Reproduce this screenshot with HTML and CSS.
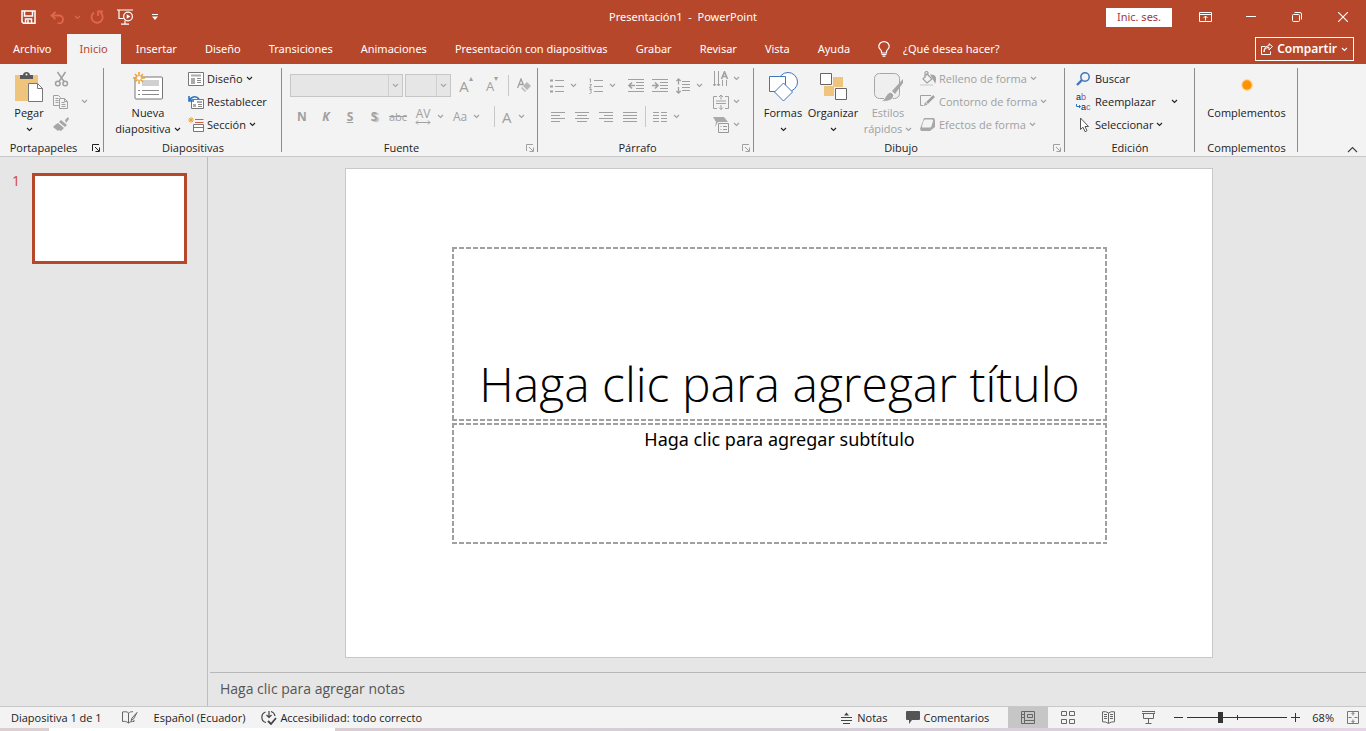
FILE: index.html
```html
<!DOCTYPE html>
<html lang="es">
<head>
    <meta charset="UTF-8">
    <meta name="viewport" content="width=device-width, initial-scale=1.0">
    <title>Presentación1 - PowerPoint</title>
    <link rel="stylesheet" href="styles.css">
</head>
<body>

    <!-- shared icons -->
    <svg class="sprite" aria-hidden="true">
        <symbol id="chevron" viewBox="0 0 7 5"><path d="M1 1l2.5 2.5L6 1" fill="none" stroke="currentColor" stroke-width="1.1"/></symbol>
        <symbol id="launcher" viewBox="0 0 8 8"><path d="M.5 7V.5H7M3 3l4 4M7.5 3.500v4h-4" fill="none" stroke="currentColor"/></symbol>
    </svg>

    <header class="titlebar">
        <div class="quick">
            <button class="quick-btn" aria-label="Guardar">
                <svg width="15" height="14" viewBox="0 0 15 14" fill="none" stroke="#fff" stroke-width="1.5"><path d="M1 1h13v12.200H2.500L1 11.800zM3.500 1v5h8V1M4.500 13V9h6v4M7 10v3"/></svg>
            </button>
            <button class="quick-btn faded" aria-label="Deshacer">
                <svg width="15" height="13" viewBox="0 0 15 13" fill="none" stroke="currentColor" stroke-width="1.8"><path d="M5.500 .8L1.500 4.500l4 3.700M1.500 4.500H9a4 4 0 0 1 0 8H7.500"/></svg>
            </button>
            <button class="quick-btn narrow faded" aria-label="Opciones de deshacer"><svg class="chev"><use href="#chevron"/></svg></button>
            <button class="quick-btn faded" aria-label="Repetir">
                <svg width="14" height="14" viewBox="0 0 14 14" fill="none" stroke="currentColor" stroke-width="1.800"><path d="M4 2.500A5.600 5.600 0 1 0 10.500 2.700M8 6V1.500h5"/></svg>
            </button>
            <button class="quick-btn" aria-label="Presentación desde el principio">
                <svg width="17" height="16" viewBox="0 0 17 16" fill="none" stroke="#fff" stroke-width="1.200"><path d="M0 1h16M2 1v8.500h4.500M8 11.500V15M4 15.200h8"/><circle cx="11" cy="7.500" r="4.400"/><path d="M9.700 5.200v4.600l3.600-2.300z" fill="#fff" stroke="none"/></svg>
            </button>
            <button class="quick-btn" aria-label="Personalizar barra de acceso rápido">
                <svg width="6" height="6" viewBox="0 0 6 6" fill="#fff"><path d="M0 0h6v1H0zM0 2.500h6L3 6z"/></svg>
            </button>
        </div>
        <span class="doc-title">Presentación1 &nbsp;-&nbsp; PowerPoint</span>
        <div class="window-tools">
            <button class="signin">Inic. ses.</button>
            <button class="win-btn" aria-label="Opciones de presentación de la cinta">
                <svg width="13" height="10" viewBox="0 0 13 10" fill="none" stroke="#fff"><path d="M.5 .5h12v9H.5zM.5 2.500h12M6.500 8.500V4M4.500 6l2-2 2 2"/></svg>
            </button>
            <button class="win-btn" aria-label="Minimizar">
                <svg width="10" height="10" viewBox="0 0 10 10" stroke="#fff"><path d="M0 4.500h10"/></svg>
            </button>
            <button class="win-btn" aria-label="Restaurar">
                <svg width="10" height="10" viewBox="0 0 10 10" fill="none" stroke="#fff"><rect x=".5" y="2.500" width="7" height="7" rx="1"/><path d="M2.500 .5H8a1.500 1.500 0 0 1 1.500 1.500v5.500"/></svg>
            </button>
            <button class="win-btn" aria-label="Cerrar">
                <svg width="10" height="10" viewBox="0 0 10 10" stroke="#fff" stroke-width="1.100"><path d="M0 0l10 10M10 0L0 10"/></svg>
            </button>
        </div>
    </header>

    <nav class="tabs">
        <button class="tab">Archivo</button>
        <button class="tab active">Inicio</button>
        <button class="tab">Insertar</button>
        <button class="tab">Diseño</button>
        <button class="tab">Transiciones</button>
        <button class="tab">Animaciones</button>
        <button class="tab">Presentación con diapositivas</button>
        <button class="tab">Grabar</button>
        <button class="tab">Revisar</button>
        <button class="tab">Vista</button>
        <button class="tab">Ayuda</button>
        <label class="tell-me">
            <svg width="12" height="16" viewBox="0 0 12 16" fill="none" stroke="#fff" stroke-width="1.200"><path d="M3.500 12V10.500C3.500 9 .8 8 .8 5.500a5.200 4.900 0 0 1 10.400 0C11.200 8 8.500 9 8.500 10.500V12zM3.500 13.500h5M4.500 15.200h3"/></svg>
            <input type="text" placeholder="¿Qué desea hacer?" aria-label="¿Qué desea hacer?">
        </label>
        <button class="share">
            <svg width="12" height="12" viewBox="0 0 12 12" fill="none" stroke="#fff"><path d="M4.500 3.500h-4v8h9v-3M3 9c0-3 2-4.500 5-4.500V7l3.500-3.500L8 .7v2C5 3 3 5 3 9z"/></svg>
            Compartir
            <svg class="chev"><use href="#chevron"/></svg>
        </button>
    </nav>

    <section class="ribbon">
        <div class="group clipboard">
            <div class="group-body">
                <button class="big">
                    <svg width="30" height="32" viewBox="0 0 30 32">
                        <path d="M1 4h23v26H1z" fill="#efc57d"/><path d="M6 8V4h3c0-4 7-4 7 0h3v4z" fill="#595959"/><circle cx="12.500" cy="3.500" r="1" fill="#f3f3f3"/>
                        <path d="M14.500 12.500h9l5 5v13h-14z" fill="#fff" stroke="#777"/><path d="M23.500 12.500v5h5" fill="none" stroke="#777"/>
                    </svg>
                    <span>Pegar</span>
                    <span><svg class="chev"><use href="#chevron"/></svg></span>
                </button>
                <div class="rows">
                    <button class="small off" aria-label="Cortar">
                        <svg width="16" height="16" viewBox="0 0 16 16" fill="none" stroke="currentColor" stroke-width="1.500"><path d="M4.500 1l6.500 9.500M12.500 1L6 10.500"/><circle cx="4.800" cy="12.500" r="2.300"/><circle cx="12.200" cy="12.500" r="2.300"/></svg>
                    </button>
                    <button class="small off" aria-label="Copiar">
                        <svg width="16" height="14" viewBox="0 0 16 14" fill="none" stroke="currentColor"><path d="M6 10.500H.5V.5h5l2 2M2.500 3.500h3M2.500 5.500h3M2.500 7.500h3"/><path d="M6.500 3.500h5l3 3v7h-8zM11.500 3.500v3h3M8.500 7.500h3M8.500 9.500h4M8.500 11.500h4"/></svg>
                        <svg class="chev"><use href="#chevron"/></svg>
                    </button>
                    <button class="small off" aria-label="Copiar formato">
                        <svg width="16" height="15" viewBox="0 0 16 15" fill="#a6a6a6"><path d="M12 3l3-3 1 2-3 4zM8 3l6 5-2 2-6-5zM5 6l6 5-3 3-2-1-1 1-5-4 2-2z"/></svg>
                    </button>
                </div>
            </div>
            <div class="group-label"><span>Portapapeles</span><button class="launch" aria-label="Más opciones de Portapapeles"><svg width="8" height="8"><use href="#launcher"/></svg></button></div>
        </div>

        <div class="group slides">
            <div class="group-body">
                <button class="big">
                    <svg width="30" height="32" viewBox="0 0 30 32">
                        <rect x="2" y="6" width="27.500" height="22" rx="1" fill="#fff" stroke="#777"/><path d="M9 9h17v6H9z" fill="#d0d0d0"/><path d="M5 19.500h2M9 19.500h17M5 23.500h2M9 23.500h17" stroke="#8a8a8a"/>
                        <path d="M6 1v12M0 7h12M2 3l8 8M10 3l-8 8" stroke="#f0a030" stroke-width="1.500"/><circle cx="6" cy="7" r="2.400" fill="#fff" stroke="#f0b050"/>
                    </svg>
                    <span>Nueva</span>
                    <span>diapositiva <svg class="chev"><use href="#chevron"/></svg></span>
                </button>
                <div class="rows">
                    <button class="small">
                        <svg width="16" height="14" viewBox="0 0 16 14"><path d="M.5 .5h15v13H.5z" fill="#fff" stroke="#777"/><path d="M3 2.500h10v2H3zM3 6h4v6H3z" fill="#aaa"/><path d="M9 6.500h4M9 8.500h4M9 10.500h4" stroke="#888"/></svg>
                        Diseño <svg class="chev"><use href="#chevron"/></svg>
                    </button>
                    <button class="small">
                        <svg width="16" height="14" viewBox="0 0 16 14"><path d="M3.500 4.500h12v9h-12z" fill="#fff" stroke="#777"/><path d="M9 6h5v2H9zM5 9h3v3H5z" fill="#aaa"/><path d="M10 9.500h4M10 11.500h4" stroke="#888"/><path d="M1.500 6C2 2 8 0 11 4M1 1v5h5" fill="none" stroke="#2b72c4" stroke-width="1.600"/></svg>
                        Restablecer
                    </button>
                    <button class="small">
                        <svg width="16" height="15" viewBox="0 0 16 15"><path d="M3 0v6M0 3h6M1 1l4 4M5 1L1 5" stroke="#f0a030"/><path d="M7 2.500h8.500M7 5.500h8.500" stroke="#d2603d"/><path d="M5.500 7.500h10v7h-10z" fill="#fff" stroke="#777"/><path d="M5.500 10.500h10" stroke="#777"/></svg>
                        Sección <svg class="chev"><use href="#chevron"/></svg>
                    </button>
                </div>
            </div>
            <div class="group-label"><span>Diapositivas</span></div>
        </div>

        <div class="group font">
            <div class="group-body lines">
                <div class="line">
                    <span class="combo combo-font"><select disabled aria-label="Fuente"><option></option></select><svg class="chev"><use href="#chevron"/></svg></span>
                    <span class="combo combo-size"><select disabled aria-label="Tamaño de fuente"><option></option></select><svg class="chev"><use href="#chevron"/></svg></span>
                    <button class="tool glyph off" aria-label="Aumentar tamaño de fuente">A<sup>▴</sup></button>
                    <button class="tool glyph less off" aria-label="Disminuir tamaño de fuente">A<sup>▾</sup></button>
                    <span class="divider"></span>
                    <button class="tool off" aria-label="Borrar formato">
                        <svg width="15" height="15" viewBox="0 0 15 15" fill="none" stroke="currentColor" stroke-width="1.300"><path d="M.6 10L4 1l2.500 6M2 6.500h4"/><path d="M4 10l6-6 4 4-6 6z" fill="#b8b8b8" stroke="none"/><path d="M5.500 8.500l4 4" stroke="#f3f3f3"/></svg>
                    </button>
                </div>
                <div class="line">
                    <button class="tool off"><b>N</b></button>
                    <button class="tool off"><b><i>K</i></b></button>
                    <button class="tool off"><b><u>S</u></b></button>
                    <button class="tool off shadow"><b>S</b></button>
                    <button class="tool off strike"><s>abc</s></button>
                    <button class="tool off spacing"><span class="kern">AV<svg width="16" height="5" viewBox="0 0 16 5" fill="none" stroke="currentColor"><path d="M1 2.500h14M3 .5l-2 2 2 2M13 .5l2 2-2 2"/></svg></span><svg class="chev"><use href="#chevron"/></svg></button>
                    <button class="tool off case">Aa<svg class="chev"><use href="#chevron"/></svg></button>
                    <span class="divider"></span>
                    <button class="tool off color"><span>A</span><svg class="chev"><use href="#chevron"/></svg></button>
                </div>
            </div>
            <div class="group-label"><span>Fuente</span><button class="launch off" aria-label="Más opciones de Fuente"><svg width="8" height="8"><use href="#launcher"/></svg></button></div>
        </div>

        <div class="group paragraph">
            <div class="group-body">
                <div class="lines">
                    <div class="line">
                        <button class="tool off list" aria-label="Viñetas"><svg width="14" height="14" viewBox="0 0 14 14" stroke="currentColor"><path d="M5 1.500h9M5 7.500h9M5 12.500h9"/><path d="M0 1.500h3M0 7.500h3M0 12.500h3" stroke-width="2"/></svg><svg class="chev"><use href="#chevron"/></svg></button>
                        <button class="tool off list" aria-label="Numeración"><svg width="14" height="16" viewBox="0 0 14 16" fill="none" stroke="currentColor"><path d="M5 2.500h9M5 8.500h9M5 13.500h9M.5 1h1v3.500M.5 6.500h2l-2 3.500h2M.5 11.500h2l-1 1.500 1 1-1 1.500h-1"/></svg><svg class="chev"><use href="#chevron"/></svg></button>
                        <button class="tool off" aria-label="Disminuir sangría"><svg width="16" height="13" viewBox="0 0 16 13" fill="none" stroke="currentColor"><path d="M0 .5h16M8 3.500h8M8 6.500h8M8 9.500h8M0 12.500h16"/><path d="M7 6.500H1M4 3.500l-3 3 3 3" stroke-width="1.600"/></svg></button>
                        <button class="tool off" aria-label="Aumentar sangría"><svg width="16" height="13" viewBox="0 0 16 13" fill="none" stroke="currentColor"><path d="M0 .5h16M8 3.500h8M8 6.500h8M8 9.500h8M0 12.500h16"/><path d="M0 6.500h6M3 3.500l3 3-3 3" stroke-width="1.600"/></svg></button>
                        <button class="tool off list" aria-label="Interlineado"><svg width="14" height="16" viewBox="0 0 14 16" fill="none" stroke="currentColor"><path d="M6 3.500h8M6 6.500h8M6 9.500h8M6 12.500h8"/><path d="M2.500 1v5.500M.3 3l2.200-2 2.200 2M2.500 9v6M.3 13l2.200 2 2.200-2" stroke-width="1.300"/></svg><svg class="chev"><use href="#chevron"/></svg></button>
                    </div>
                    <div class="line">
                        <button class="tool off" aria-label="Alinear a la izquierda"><svg width="14" height="10" viewBox="0 0 14 10" stroke="currentColor"><path d="M0 .5h14M0 3.500h9M0 6.500h14M0 9.500h9"/></svg></button>
                        <button class="tool off" aria-label="Centrar"><svg width="14" height="10" viewBox="0 0 14 10" stroke="currentColor"><path d="M0 .5h14M2 3.500h10M0 6.500h14M2 9.500h10"/></svg></button>
                        <button class="tool off" aria-label="Alinear a la derecha"><svg width="14" height="10" viewBox="0 0 14 10" stroke="currentColor"><path d="M0 .5h14M5 3.500h9M0 6.500h14M5 9.500h9"/></svg></button>
                        <button class="tool off" aria-label="Justificar"><svg width="14" height="10" viewBox="0 0 14 10" stroke="currentColor"><path d="M0 .5h14M0 3.500h14M0 6.500h14M0 9.500h14"/></svg></button>
                        <span class="divider"></span>
                        <button class="tool off list" aria-label="Columnas"><svg width="14" height="10" viewBox="0 0 14 10" stroke="currentColor"><path d="M0 .5h6M8 .5h6M0 3.500h6M8 3.500h6M0 6.500h6M8 6.500h6M0 9.500h6M8 9.500h6"/></svg><svg class="chev"><use href="#chevron"/></svg></button>
                    </div>
                </div>
                <div class="rows">
                    <button class="small off" aria-label="Dirección del texto"><svg width="16" height="16" viewBox="0 0 16 16" fill="none" stroke="currentColor"><path d="M1.500 0v15M5.500 0v15M9.500 9v6M13.500 9v6M0 13l1.500 2L3 13M4 13l1.500 2L7 13"/><path d="M8.500 8L11.500 .8 14.500 8M9.500 5.500h4" stroke-width="1.600"/></svg><svg class="chev"><use href="#chevron"/></svg></button>
                    <button class="small off" aria-label="Alinear texto"><svg width="16" height="16" viewBox="0 0 16 16" fill="none" stroke="currentColor"><path d="M4 2.500H.5v12H4M12 2.500h3.500v12H12M3 7h10M3 9.500h10M8 1v4.500M6 3l2-2 2 2M8 11v4.500M6 13.500l2 2 2-2"/></svg><svg class="chev"><use href="#chevron"/></svg></button>
                    <button class="small off" aria-label="Convertir a SmartArt"><svg width="16" height="16" viewBox="0 0 16 16"><path d="M0 0h11l4 5H5l-3 5 1-5z" fill="#aaa"/><path d="M5.500 6.500h10v9h-10z" fill="#f3f3f3" stroke="#999"/><path d="M7.500 9.500h1M10 9.500h4M7.500 12.500h1M10 12.500h4" stroke="#999"/></svg><svg class="chev"><use href="#chevron"/></svg></button>
                </div>
            </div>
            <div class="group-label"><span>Párrafo</span><button class="launch off" aria-label="Más opciones de Párrafo"><svg width="8" height="8"><use href="#launcher"/></svg></button></div>
        </div>

        <div class="group drawing">
            <div class="group-body">
                <button class="big">
                    <svg width="30" height="32" viewBox="0 0 30 32" fill="#fff" stroke="#3f76bd"><circle cx="20" cy="11" r="9.500"/><path d="M1.500 5.500h16v15h-16z"/><path d="M15.500 12l9 9-9 9-9-9z"/></svg>
                    <span>Formas</span>
                    <span><svg class="chev"><use href="#chevron"/></svg></span>
                </button>
                <button class="big">
                    <svg width="28" height="30" viewBox="0 0 28 30"><path d="M14 5h10v10H14zM5 14h10v10H5z" fill="#efc57d"/><path d="M1.500 1.500h11v11h-11zM16.500 16.500h11v11h-11z" fill="#fff" stroke="#666"/></svg>
                    <span>Organizar</span>
                    <span><svg class="chev"><use href="#chevron"/></svg></span>
                </button>
                <button class="big off">
                    <svg width="30" height="32" viewBox="0 0 30 32"><rect x="1.500" y="2.500" width="25" height="25" rx="5" fill="#f0eff0" stroke="#a6a6a6"/><path d="M30 8L19 20l3 3 8-11z" fill="#a6a6a6"/><path d="M18 21l3 3c-1 6-7 7-13 6 5-1 4-8 10-9z" fill="#a6a6a6" stroke="#f3f3f3"/></svg>
                    <span>Estilos</span>
                    <span>rápidos <svg class="chev"><use href="#chevron"/></svg></span>
                </button>
                <div class="rows">
                    <button class="small off">
                        <svg width="16" height="15" viewBox="0 0 16 15" fill="none" stroke="currentColor" stroke-width="1.200"><path d="M7 3l5 5-5 4-4-4zM5 7V1.500q1.500-2 3 0V5"/><path d="M11 4c4 0 5 2 4 7-1-2-2-4-4-7z" fill="#a6a6a6"/><path d="M0 14h13" stroke="#ddd" stroke-width="2"/></svg>
                        Relleno de forma <svg class="chev"><use href="#chevron"/></svg>
                    </button>
                    <button class="small off">
                        <svg width="16" height="15" viewBox="0 0 16 15" fill="none" stroke="currentColor"><path d="M11 1.500H.5v10h3"/><path d="M14 2L7 9" stroke-width="2.500"/><path d="M5 8l2.500 2.500L4 12z" fill="#a6a6a6" stroke="none"/></svg>
                        Contorno de forma <svg class="chev"><use href="#chevron"/></svg>
                    </button>
                    <button class="small off">
                        <svg width="16" height="14" viewBox="0 0 16 14"><path d="M4 0h10l1 2v7l-5 4H1L0 11z" fill="#a8a8a8"/><path d="M5 1.500h7q1.500 0 1 1.500L11.500 8q-.5 1.500-2 1.500H3Q1.500 9.500 2 8l1.500-5Q4 1.500 5 1.500z" fill="#f3f3f3"/></svg>
                        Efectos de forma <svg class="chev"><use href="#chevron"/></svg>
                    </button>
                </div>
            </div>
            <div class="group-label"><span>Dibujo</span><button class="launch off" aria-label="Más opciones de Dibujo"><svg width="8" height="8"><use href="#launcher"/></svg></button></div>
        </div>

        <div class="group editing">
            <div class="group-body">
                <div class="rows">
                    <button class="small">
                        <svg width="16" height="14" viewBox="0 0 16 14" fill="none" stroke="#3f76bd"><circle cx="9" cy="5" r="4.200" stroke-width="1.500"/><path d="M6 8l-5 5" stroke-width="2.400"/></svg>
                        Buscar
                    </button>
                    <button class="small replace">
                        <span class="ab-icon">
                            <span>a<em>b</em></span>
                            <span class="ab-new"><svg width="5" height="5" viewBox="0 0 5 5" fill="none" stroke="#2b72c4"><path d="M.5 0v2.500h4M3 1l1.500 1.500L3 4"/></svg>a<i>c</i></span>
                        </span>
                        Reemplazar <svg class="chev"><use href="#chevron"/></svg>
                    </button>
                    <button class="small">
                        <svg width="16" height="16" viewBox="0 0 16 16" fill="#fff" stroke="#555"><path d="M4.500 1v11.500l2.500-2.300 2 4.500 2-1-2-4.200h3.500z"/></svg>
                        Seleccionar <svg class="chev"><use href="#chevron"/></svg>
                    </button>
                </div>
            </div>
            <div class="group-label"><span>Edición</span></div>
        </div>

        <div class="group addins">
            <div class="group-body">
                <button class="big">
                    <svg width="16" height="32" viewBox="0 0 16 32"><circle cx="8" cy="14" r="6" fill="#fbd9a5"/><circle cx="8" cy="14" r="4.700" fill="#ff9200"/></svg>
                    <span>Complementos</span>
                </button>
            </div>
            <div class="group-label"><span>Complementos</span></div>
        </div>

        <button class="collapse" aria-label="Contraer la cinta">
            <svg width="11" height="7" viewBox="0 0 11 7" fill="none" stroke="#444" stroke-width="1.200"><path d="M1 6l4.500-4.500L10 6"/></svg>
        </button>
    </section>

    <div class="workspace">
        <aside class="thumbs">
            <span class="thumb-number">1</span>
            <div class="thumb"></div>
        </aside>
        <main class="editor">
            <div class="canvas">
                <div class="slide">
                    <h1 class="placeholder slide-title">Haga clic para agregar título</h1>
                    <p class="placeholder slide-subtitle">Haga clic para agregar subtítulo</p>
                </div>
            </div>
            <input class="notes" type="text" placeholder="Haga clic para agregar notas" aria-label="Notas">
        </main>
    </div>

    <footer class="statusbar">
        <span class="slide-count">Diapositiva 1 de 1</span>
        <button class="status-btn spell" aria-label="Revisión ortográfica">
            <svg width="16" height="13" viewBox="0 0 16 13" fill="none" stroke="#666"><path d="M6.500 12V2C5 .5 3 .5 .5 1v9.500c2.500-.5 4 0 6 1.500 2-1.500 3-1.500 5.500-1.500V9M6.500 2C8 1 9 .7 11 .7"/><path d="M15 1.500l-5 5.500-1 2.500L11.500 8z"/></svg>
        </button>
        <button class="status-btn">Español (Ecuador)</button>
        <button class="status-btn access">
            <svg width="16" height="15" viewBox="0 0 16 15" fill="none" stroke="#444" stroke-width="1.200"><path d="M4.500 2A5.500 5.500 0 0 0 5 12.500M8 1v6M5.500 5L8 7.500 10.500 5M10 1.500c2 .5 3.500 2 4 4.500"/><path d="M7 11l3 3 5-6" stroke-width="1.800"/></svg>
            Accesibilidad: todo correcto
        </button>
        <div class="status-right">
            <button class="status-btn">
                <svg width="11" height="12" viewBox="0 0 11 12" stroke="#444"><path d="M0 5.500h11M0 8.500h11M2 11.500h7" /><path d="M3 3.500L5.500 .5 8 3.500z" fill="#444" stroke="none"/></svg>
                Notas
            </button>
            <button class="status-btn comments">
                <svg width="14" height="13" viewBox="0 0 14 13" fill="#555"><path d="M1 0h12q1 0 1 1v7q0 1-1 1H6l-3 4V9H1Q0 9 0 8V1q0-1 1-1z"/></svg>
                Comentarios
            </button>
            <div class="views">
                <button class="view active" aria-label="Normal"><svg width="14" height="13" viewBox="0 0 14 13" fill="none" stroke="#666"><path d="M.5 .5h13v12H.5zM3.500 .5v12M6.500 3.500h5v3h-5zM3.500 9.500h10M0 3.500h3M0 6.500h3"/></svg></button>
                <button class="view" aria-label="Clasificador de diapositivas"><svg width="14" height="13" viewBox="0 0 14 13" fill="none" stroke="#666"><path d="M.5 .5h5v4h-5zM8.500 .5h5v4h-5zM.5 8.500h5v4h-5zM8.500 8.500h5v4h-5z"/></svg></button>
                <button class="view" aria-label="Vista de lectura"><svg width="13" height="13" viewBox="0 0 13 13" fill="none" stroke="#666"><path d="M6.500 2Q4 0 .5 .8v10Q4 10.500 6.500 12.500 9 10.500 12.500 10.800v-10Q9 0 6.500 2zv10M2 3.500h3M2 5.500h3M2 7.500h3M8 3.500h3M8 5.500h3M8 7.500h3"/></svg></button>
                <button class="view" aria-label="Presentación"><svg width="13" height="13" viewBox="0 0 13 13" fill="none" stroke="#666"><path d="M0 .5h13v2H0M1.500 2.500v5h10v-5M6.500 7.500v5M3.500 12.500h6"/></svg></button>
            </div>
            <div class="zoom">
                <button class="zoom-btn" aria-label="Alejar"><svg width="9" height="9" viewBox="0 0 9 9" stroke="#333"><path d="M0 4.500h9"/></svg></button>
                <input type="range" min="0" max="100" value="32" aria-label="Zoom">
                <button class="zoom-btn" aria-label="Acercar"><svg width="9" height="9" viewBox="0 0 9 9" stroke="#333"><path d="M0 4.500h9M4.500 0v9"/></svg></button>
            </div>
            <button class="status-btn percent">68%</button>
            <button class="status-btn fit" aria-label="Ajustar a la ventana"><svg width="12" height="13" viewBox="0 0 12 13" fill="none" stroke="#777"><path d="M.5 .5h11v12H.5zM6 1.500v3M4.500 3L6 1.500 7.500 3M6 11.500v-3M4.500 10L6 11.500 7.500 10M1.500 6.500h3M10.500 6.500h-3"/></svg></button>
        </div>
    </footer>
    <div class="desktop-edge"><span></span></div>

</body>
</html>
```
FILE: styles.css
```css
* {
    box-sizing: border-box;
}

body {
    margin: 0;
    height: 100vh;
    display: flex;
    flex-direction: column;
    overflow: hidden;
    font-family: 'Open Sans', 'Noto Sans', sans-serif;
    font-size: 11px;
    line-height: 16px;
    color: #222;
    background-color: #e6e6e6;
}

button, input, select {
    font: inherit;
    color: inherit;
    background: none;
    border: none;
    border-radius: 0;
    padding: 0;
    margin: 0;
}

button {
    display: flex;
    align-items: center;
    justify-content: center;
    white-space: nowrap;
}

svg {
    display: block;
    flex: none;
}

.sprite {
    position: absolute;
    width: 0;
    height: 0;
}

.chev {
    width: 7px;
    height: 5px;
}

/* title bar */
.titlebar {
    display: grid;
    grid-template-columns: 1fr auto 1fr;
    align-items: center;
    height: 34px;
    background-color: #b7472a;
    color: #fff;
    font-family: 'Noto Sans', 'Open Sans', sans-serif;
}

.quick {
    display: flex;
    align-items: center;
    padding-left: 14px;
}

.quick-btn {
    width: 29px;
    height: 30px;
}

.quick-btn.narrow {
    width: 10px;
}

.faded {
    color: #e2674a;
}

.window-tools {
    display: flex;
    justify-content: flex-end;
    align-items: center;
}

.signin {
    width: 66px;
    height: 19px;
    margin-right: 10px;
    background-color: #fff;
    color: #a4373a;
}

.win-btn {
    width: 46px;
    height: 30px;
}

/* ribbon tabs */
.tabs {
    display: flex;
    gap: 2px;
    height: 30px;
    padding-right: 12px;
    background-color: #b7472a;
    color: #fff;
    font-family: 'Noto Sans', 'Open Sans', sans-serif;
}

.tab {
    padding: 0 13px;
}

.tab.active {
    background-color: #f3f3f3;
    color: #b7472a;
}

.tell-me {
    display: flex;
    align-items: center;
    gap: 13px;
    flex: 1;
    padding-left: 13px;
}

.tell-me input {
    width: 140px;
}

.tell-me input::placeholder {
    color: #fff;
    opacity: 1;
}

.share {
    align-self: center;
    gap: 4px;
    height: 24px;
    padding: 0 5px;
    border: 1px solid #fff;
    font-size: 12px;
    font-weight: 600;
}

/* ribbon */
.ribbon {
    display: flex;
    height: 93px;
    background-color: #f3f3f3;
    border-bottom: 1px solid #c8c8c8;
}

.group {
    display: flex;
    flex-direction: column;
    padding: 3px 8px 0;
    background: linear-gradient(#8c8c8c, #8c8c8c) right 4px / 1px 84px no-repeat;
}

.clipboard {
    width: 104px;
}

.slides {
    width: 178px;
}

.font {
    width: 256px;
}

.paragraph {
    width: 216px;
}

.drawing {
    width: 311px;
}

.editing {
    width: 130px;
}

.addins {
    width: 103px;
}

.group-body {
    display: flex;
    height: 73px;
}

.group-label {
    display: flex;
    align-items: center;
    height: 16px;
    margin: 0 -8px;
}

.group-label span {
    flex: 1;
    text-align: center;
}

.launch {
    width: 17px;
    height: 16px;
}

.off {
    color: #a0a0a0;
}

.big {
    flex-direction: column;
    justify-content: flex-start;
    height: 72px;
    padding-top: 2px;
}

.big > svg {
    height: 36px;
}

.big span {
    display: flex;
    align-items: center;
    gap: 3px;
    height: 16px;
}

.clipboard .big {
    width: 42px;
    margin-right: 3px;
}

.slides .big {
    width: 72px;
    margin-right: 4px;
}

.drawing .group-body {
    margin-left: -4px;
}

.drawing .big {
    width: 50px;
}

.drawing .big.off {
    width: 60px;
}

.drawing .rows {
    padding-left: 2px;
}

.addins .big {
    width: 100%;
}

.rows {
    display: flex;
    flex-direction: column;
    align-items: flex-start;
}

.small {
    gap: 3px;
    height: 23px;
}

.clipboard .small {
    gap: 12px;
}

.lines {
    flex-direction: column;
    padding-top: 3px;
}

.line {
    display: flex;
    align-items: center;
    height: 31px;
}

.combo {
    display: flex;
    align-items: center;
    height: 23px;
    margin-right: 2px;
    padding-right: 3px;
    border: 1px solid #c6c6c6;
    background-color: #e6e6e6;
    color: #a6a6a6;
}

.combo select {
    appearance: none;
    height: 21px;
    margin-right: 3px;
    border-right: 1px solid #c6c6c6;
}

.combo-font select {
    width: 98px;
}

.combo-size select {
    width: 31px;
}

.tool {
    flex: none;
    width: 24px;
    height: 24px;
    font-size: 12px;
}

.glyph {
    align-items: flex-end;
    width: 26px;
    font-size: 15px;
    line-height: 24px;
}

.glyph.less {
    font-size: 13px;
}

.glyph sup {
    font-size: 8px;
    line-height: 8px;
    align-self: flex-start;
}

.divider {
    flex: none;
    width: 1px;
    height: 21px;
    margin: 0 3px;
    background-color: #c8c8c8;
}

.shadow {
    text-shadow: 2px 1px 1px #bbb;
}

.strike {
    font-size: 11px;
}

.spacing, .case, .color, .list {
    gap: 6px;
    width: 39px;
}

.case {
    justify-content: flex-start;
    width: 42px;
    padding-left: 4px;
}

.color {
    justify-content: flex-start;
    width: 34px;
    padding-left: 4px;
    font-size: 15px;
}

.kern {
    display: flex;
    flex-direction: column;
    align-items: center;
    line-height: 12px;
}

.paragraph .group-body {
    justify-content: space-between;
    padding-right: 6px;
}

.paragraph .small {
    gap: 4px;
}

.paragraph .list {
    justify-content: flex-start;
    padding-left: 4px;
}

.editing .rows {
    padding-left: 3px;
}

.replace .chev {
    margin-left: 12px;
}

.ab-icon {
    display: flex;
    flex-direction: column;
    width: 16px;
    font-family: 'Liberation Sans', sans-serif;
    font-size: 9px;
    line-height: 10px;
    text-align: left;
}

.ab-new {
    display: flex;
    align-items: center;
}

.ab-icon em {
    font-style: normal;
    color: #8a4fb5;
}

.ab-icon i {
    font-style: normal;
    color: #2b72c4;
}

.collapse {
    align-self: flex-end;
    width: 11px;
    height: 14px;
    margin: 0 8px 0 auto;
}

/* workspace */
.workspace {
    display: flex;
    flex: 1;
    min-height: 0;
}

.thumbs {
    display: flex;
    align-items: flex-start;
    gap: 12px;
    width: 208px;
    padding: 16px 20px 0 12px;
    border-right: 1px solid #bdbdbd;
}

.thumb-number {
    width: 8px;
    font-size: 14px;
    color: #d24726;
}

.thumb {
    flex: 1;
    aspect-ratio: 155 / 91;
    background-color: #fff;
    border: 3px solid #b7472a;
}

.editor {
    display: flex;
    flex-direction: column;
    flex: 1;
    padding-left: 2px;
}

.canvas {
    display: flex;
    justify-content: center;
    flex: 1;
    min-height: 0;
    padding: 11px 18px 14px 0;
}

.slide {
    display: grid;
    grid-template-columns: 106fr 655fr 105fr;
    grid-template-rows: 76fr 174fr 121fr 111fr;
    row-gap: 2px;
    height: 100%;
    aspect-ratio: 62 / 35;
    background-color: #fff;
    border: 1px solid #c8c8c8;
}

.placeholder {
    grid-column: 2;
    margin: 0;
    display: flex;
    justify-content: center;
    color: #000;
    white-space: nowrap;
    background:
        repeating-linear-gradient(90deg, #a0a0a0 0 5px, transparent 5px 7px) top / 100% 2px no-repeat,
        repeating-linear-gradient(90deg, #a0a0a0 0 5px, transparent 5px 7px) bottom / 100% 2px no-repeat,
        repeating-linear-gradient(#a0a0a0 0 5px, transparent 5px 7px) left / 2px 100% no-repeat,
        repeating-linear-gradient(#a0a0a0 0 5px, transparent 5px 7px) right / 2px 100% no-repeat;
}

.slide-title {
    grid-row: 2;
    align-items: flex-end;
    padding-bottom: 7px;
    font-size: 48px;
    line-height: 60px;
    font-weight: 300;
}

.slide-subtitle {
    grid-row: 3;
    padding-top: 4px;
    font-family: 'Noto Sans', 'Open Sans', sans-serif;
    font-size: 18px;
    line-height: 24px;
}

.notes {
    height: 34px;
    padding: 0 10px 2px;
    border-top: 1px solid #b8b8b8;
    font-size: 14px;
}

.notes::placeholder {
    color: #555;
    opacity: 1;
}

/* status bar */
.statusbar {
    display: flex;
    align-items: center;
    height: 22px;
    padding-left: 11px;
    background-color: #f3f3f3;
    border-top: 1px solid #c8c8c8;
}

.status-btn {
    gap: 5px;
    height: 21px;
}

.spell {
    margin: 0 16px 0 20px;
}

.access {
    gap: 3px;
    margin-left: 16px;
}

.status-right {
    display: flex;
    align-items: center;
    margin-left: auto;
    padding-right: 7px;
}

.comments {
    gap: 3px;
    margin: 0 19px;
}

.views {
    display: flex;
}

.view {
    width: 40px;
    height: 21px;
}

.view.active {
    background-color: #c6c6c6;
}

.zoom {
    display: flex;
    align-items: center;
    gap: 4px;
    margin-left: 6px;
}

.zoom-btn {
    width: 9px;
    height: 21px;
}

.zoom input {
    appearance: none;
    width: 100px;
    height: 11px;
    background:
        linear-gradient(#333, #333) center / 1px 5px no-repeat,
        linear-gradient(#333, #333) center / 100% 1px no-repeat;
}

.zoom input::-webkit-slider-thumb {
    appearance: none;
    width: 5px;
    height: 11px;
    background-color: #333;
}

.percent {
    margin: 0 13px 0 12px;
}

.desktop-edge {
    height: 3px;
    padding-left: 49px;
    background: linear-gradient(90deg, #dccfd2, #d3ccd6 60%, #e6d3e6);
}

.desktop-edge span {
    display: block;
    width: 286px;
    height: 3px;
    background-color: #fff;
}
```
